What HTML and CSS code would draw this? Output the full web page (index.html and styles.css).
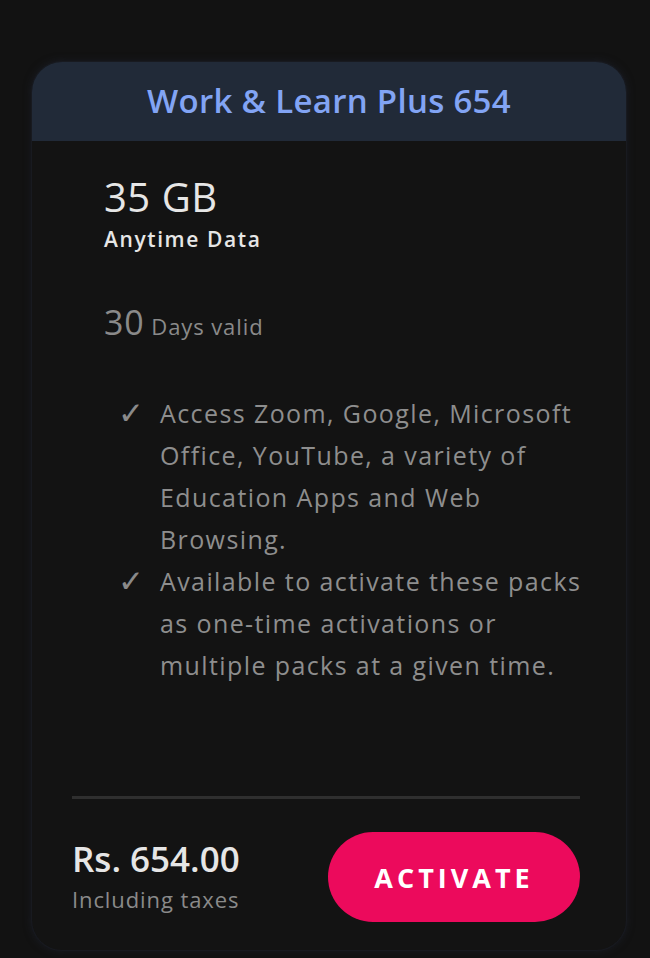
FILE: index.html
```html
<!DOCTYPE html>
<html lang="en">
<head>
    <meta charset="UTF-8">
    <meta name="viewport" content="width=device-width, initial-scale=1.0">
    <title>Work &amp; Learn Plus 654</title>
    <link rel="stylesheet" href="styles.css">
</head>
<body>
    <div class="pack-card">
        <header class="pack-header">
            <h1 class="pack-title">Work &amp; Learn Plus 654</h1>
        </header>

        <div class="pack-body">
            <div class="pack-data">35 GB</div>
            <div class="pack-data-label">Anytime Data</div>

            <div class="pack-validity"><span class="validity-days">30</span> Days valid</div>

            <ul class="pack-features">
                <li>Access Zoom, Google, Microsoft Office, YouTube, a variety of Education Apps and Web Browsing.</li>
                <li>Available to activate these packs as one-time activations or multiple packs at a given time.</li>
            </ul>
        </div>

        <div class="pack-footer">
            <div class="pack-price">
                <div class="price-amount">Rs. 654.00</div>
                <div class="price-note">Including taxes</div>
            </div>
            <button class="activate-btn">ACTIVATE</button>
        </div>
    </div>
</body>
</html>
```

FILE: styles.css
```css
body {
    margin: 0;
    padding: 62px 0 0;
    background-color: #121212;
    font-family: "Open Sans", "Noto Sans", sans-serif;
    height: 958px;
    box-sizing: border-box;
    overflow: hidden;
}

.pack-card {
    margin: 0 24px 0 32px;
    background-color: #131313;
    border-radius: 30px;
    box-shadow: 0 0 0 1px #181a20, 0 0 8px rgba(30, 34, 46, 0.8);
    overflow: hidden;
}

.pack-header {
    background-color: #212a38;
    height: 79px;
    display: flex;
    align-items: center;
    justify-content: center;
}

.pack-title {
    margin: 0 0 2px;
    font-size: 33px;
    font-weight: 600;
    color: #82a4f4;
    letter-spacing: 0.3px;
}

.pack-body {
    padding: 32px 28px 0 72px;
}

.pack-data {
    font-size: 40px;
    line-height: 48px;
    font-weight: 500;
    color: #e6e6e6;
    letter-spacing: 0.5px;
}

.pack-data-label {
    margin-top: 4px;
    font-size: 21px;
    line-height: 28px;
    font-weight: 600;
    color: #e6e6e6;
    letter-spacing: 1.6px;
}

.pack-validity {
    margin-top: 49px;
    font-size: 22px;
    line-height: 40px;
    color: #8a8a8a;
    letter-spacing: 0.9px;
}

.validity-days {
    font-size: 34px;
    font-weight: 500;
}

.pack-features {
    list-style: none;
    margin: 46px 0 0;
    padding: 0 0 0 56px;
    font-size: 25px;
    line-height: 42px;
    color: #8e8e8e;
    letter-spacing: 1.4px;
}

.pack-features li {
    position: relative;
}

.pack-features li::before {
    content: "\2713";
    position: absolute;
    left: -42px;
    font-family: "DejaVu Sans", sans-serif;
    font-size: 31px;
    color: #8a8a8a;
}

.pack-footer {
    margin: 110px 46px 0 40px;
    border-top: 3px solid #2f2f2f;
    padding: 33px 0 28px;
    display: flex;
    align-items: center;
    justify-content: space-between;
}

.pack-price {
    padding-bottom: 6px;
}

.price-amount {
    font-size: 35px;
    line-height: 48px;
    font-weight: 600;
    color: #e6e6e6;
}

.price-note {
    margin-top: 1px;
    font-size: 22px;
    line-height: 30px;
    color: #8a8a8a;
    letter-spacing: 0.9px;
}

.activate-btn {
    width: 252px;
    height: 90px;
    border: none;
    border-radius: 45px;
    background-color: #ec0a5c;
    color: #ffffff;
    font-family: "Open Sans", sans-serif;
    font-size: 27px;
    font-weight: 700;
    letter-spacing: 4px;
    cursor: pointer;
}
```
